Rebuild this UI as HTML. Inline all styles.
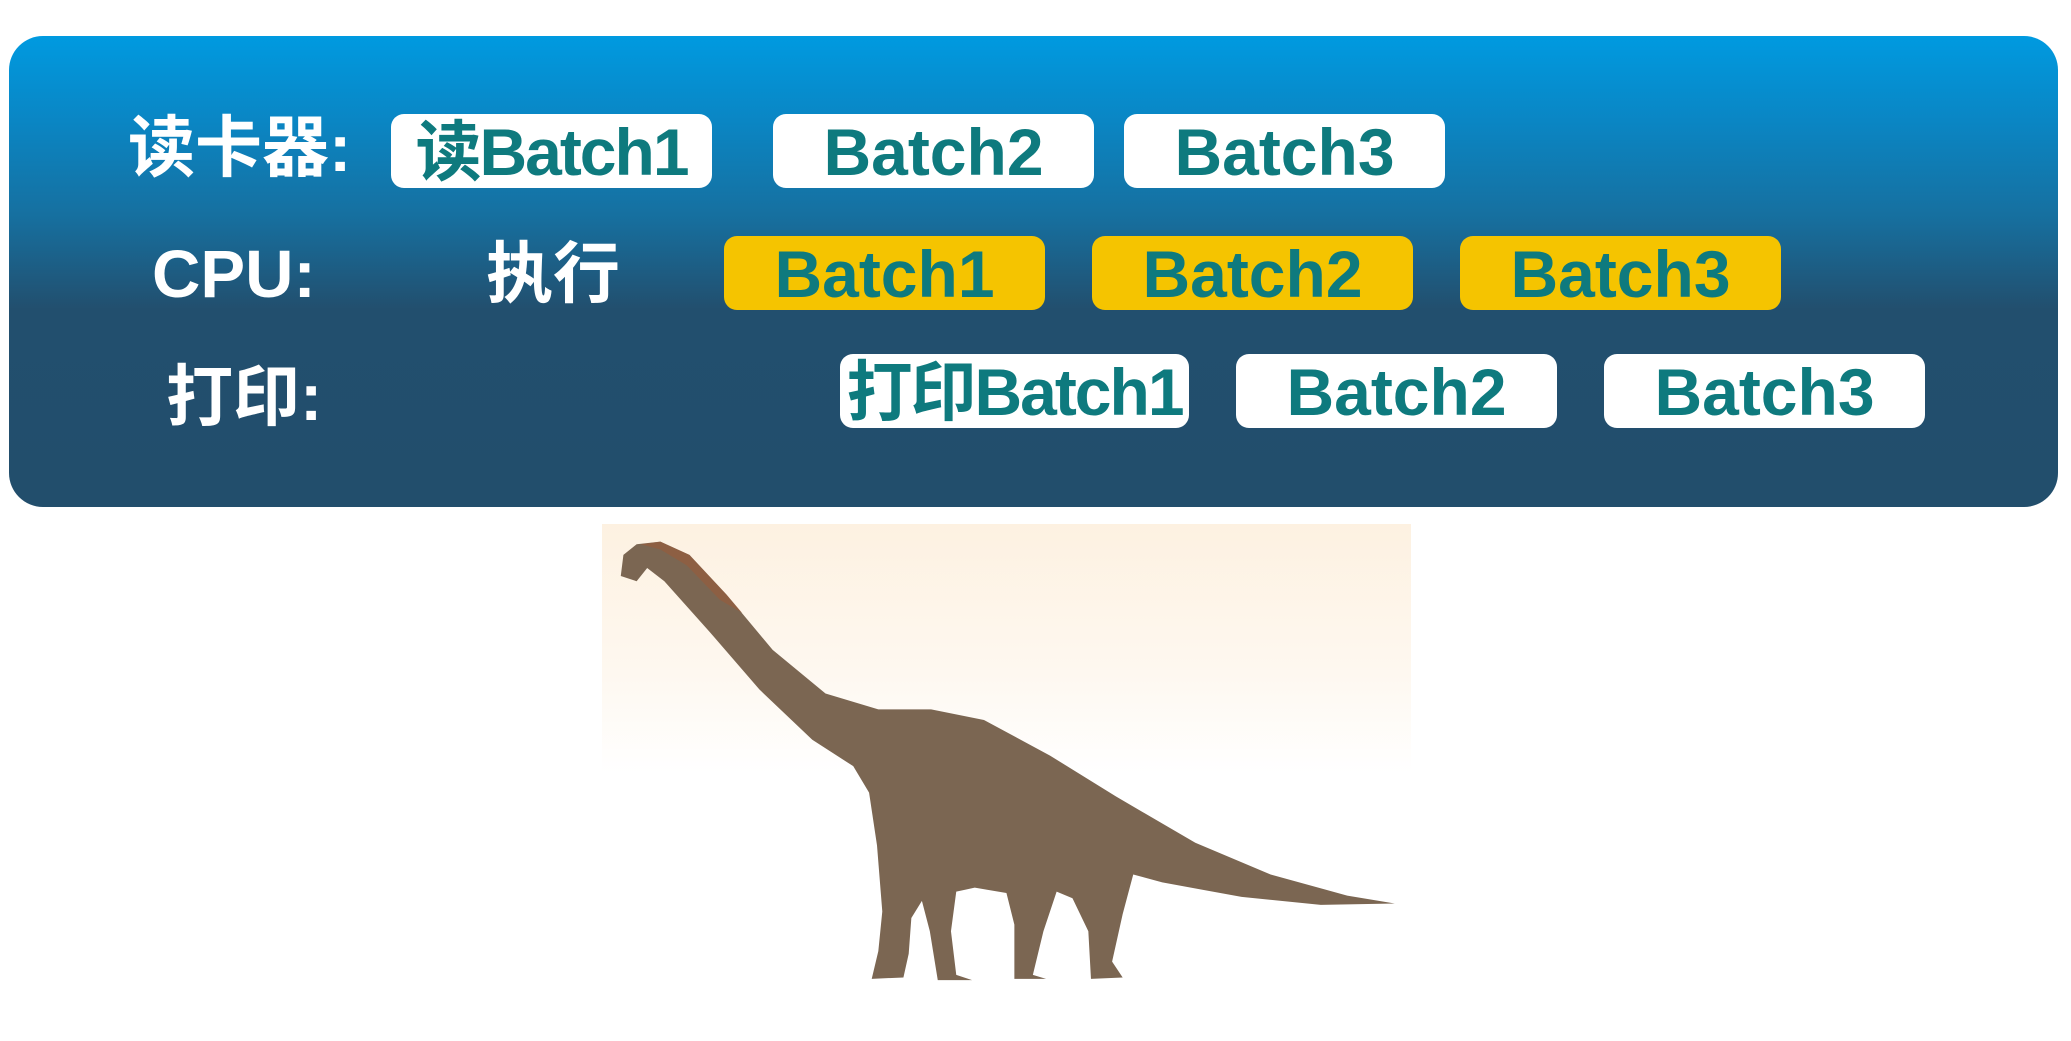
<!DOCTYPE html>
<html><head><meta charset="utf-8"><style>
html,body{margin:0;padding:0;background:#fff;width:2071px;height:1041px;overflow:hidden;position:relative;font-family:"Liberation Sans","Noto Sans CJK SC",sans-serif}
.panel{position:absolute;left:9px;top:36px;width:2049px;height:471px;border-radius:34px;background:linear-gradient(180deg,#009ae0 0%,#0a86c4 18%,#1670a0 38%,#224f6e 58%,#224e6c 100%)}
.lbl{position:absolute;color:#fff;font-weight:bold;font-size:67px;line-height:74px;height:74px;white-space:nowrap}
.b{position:absolute;height:74px;border-radius:13px;background:#fff;color:#0e7a7e;font-weight:bold;font-size:66px;line-height:76px;text-align:center;white-space:nowrap}
.y{background:#f5c400}
.img{position:absolute;left:602px;top:524px;width:809px;height:249px;background:linear-gradient(180deg,#fdf1e1 0%,#fef8f0 60%,#fff 100%)}
</style></head><body>
<div class="panel"></div>
<div class="lbl" style="left:128px;top:112px">读卡器:</div>
<div class="b" style="left:391px;top:114px;width:321px;letter-spacing:-2px">读Batch1</div>
<div class="b" style="left:773px;top:114px;width:321px">Batch2</div>
<div class="b" style="left:1124px;top:114px;width:321px">Batch3</div>
<div class="lbl" style="left:152px;top:238px">CPU:</div>
<div class="lbl" style="left:486px;top:238px">执行</div>
<div class="b y" style="left:724px;top:236px;width:321px">Batch1</div>
<div class="b y" style="left:1092px;top:236px;width:321px">Batch2</div>
<div class="b y" style="left:1460px;top:236px;width:321px">Batch3</div>
<div class="lbl" style="left:166px;top:361px">打印:</div>
<div class="b" style="left:840px;top:354px;width:349px;letter-spacing:-2px">打印Batch1</div>
<div class="b" style="left:1236px;top:354px;width:321px">Batch2</div>
<div class="b" style="left:1604px;top:354px;width:321px">Batch3</div>
<div class="img"></div>
<svg style="position:absolute;left:0;top:0" width="2071" height="1041" viewBox="0 0 1568 788">
<path fill="#7b6652" d="M470 436 L472 420 L482 412 L500 410 L522 420 L550 450 L585 492 L625 525 L665 537 L705 537 L745 545 L795 572 L845 603 L905 638 L962 662 L1020 678 L1056 684 L1000 685 L940 679 L880 668 L858 662 L850 692 L842 728 L850 740 L826 741 L824 705 L812 680 L800 675 L790 705 L782 738 L792 741 L768 741 L768 700 L762 676 L738 672 L724 675 L720 705 L724 738 L736 742 L710 742 L704 705 L698 682 L690 695 L688 722 L684 740 L660 741 L665 720 L668 690 L664 640 L658 600 L646 580 L615 560 L575 522 L537 478 L503 440 L490 430 L482 440 Z"/>
<path fill="#9a5a3a" opacity=".6" d="M485 412 L500 410 L522 420 L550 450 L562 464 L545 454 L520 428 L500 416 Z"/>
</svg>
</body></html>
